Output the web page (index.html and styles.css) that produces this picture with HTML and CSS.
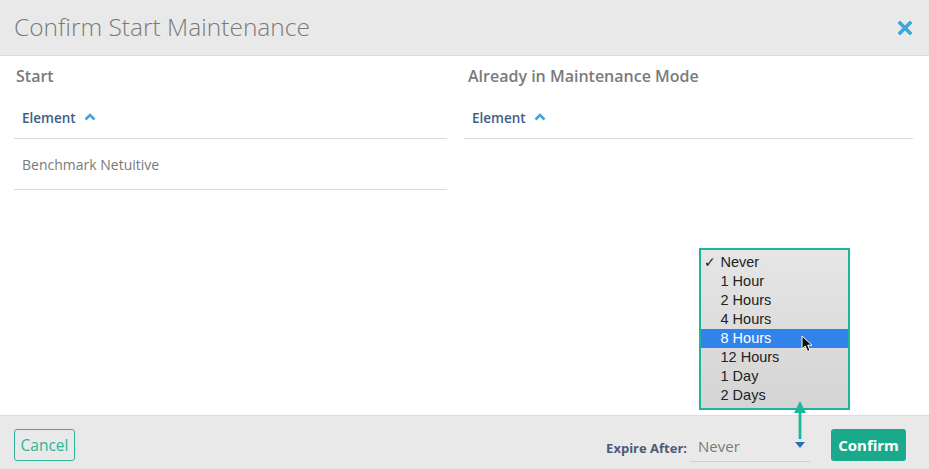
FILE: index.html
```html
<!DOCTYPE html>
<html lang="en">
<head>
<meta charset="utf-8">
<title>Confirm Start Maintenance</title>
<link rel="stylesheet" href="styles.css">
</head>
<body>
<div class="modal">
  <header class="modal-header">
    <h1 class="modal-title">Confirm Start Maintenance</h1>
    <button class="close-btn" aria-label="Close">
      <svg width="14" height="14" viewBox="0 0 14 14"><path d="M2 2 L12 12 M12 2 L2 12" stroke="#3ea6da" stroke-width="3.6" stroke-linecap="square"/></svg>
    </button>
  </header>
  <main class="modal-body">
    <section class="col col-left">
      <h2 class="col-title">Start</h2>
      <div class="table">
        <div class="th">Element
          <svg class="chev" width="12" height="8" viewBox="0 0 12 8"><path d="M1.5 6.5 L6 2 L10.5 6.5" fill="none" stroke="#3ea6da" stroke-width="2.6"/></svg>
        </div>
        <div class="td">Benchmark Netuitive</div>
      </div>
    </section>
    <section class="col col-right">
      <h2 class="col-title">Already in Maintenance Mode</h2>
      <div class="table">
        <div class="th">Element
          <svg class="chev" width="12" height="8" viewBox="0 0 12 8"><path d="M1.5 6.5 L6 2 L10.5 6.5" fill="none" stroke="#3ea6da" stroke-width="2.6"/></svg>
        </div>
      </div>
    </section>
  </main>
  <footer class="modal-footer">
    <button class="btn-cancel">Cancel</button>
    <div class="footer-right">
      <span class="expire-label">Expire After:</span>
      <div class="select">
        <span>Never</span>
        <svg class="select-caret" width="10" height="6" viewBox="0 0 10 6"><path d="M0 0 H10 L5 6 Z" fill="#2b6cbf"/></svg>
      </div>
      <button class="btn-confirm">Confirm</button>
    </div>
  </footer>

  <div class="menu">
    <ul class="menu-list">
      <li class="checked"><span class="check">✓</span>Never</li>
      <li>1 Hour</li>
      <li>2 Hours</li>
      <li>4 Hours</li>
      <li class="active">8 Hours</li>
      <li>12 Hours</li>
      <li>1 Day</li>
      <li>2 Days</li>
    </ul>
  </div>
  <svg class="pointer" width="14" height="18" viewBox="0 0 14 18"><path d="M1 1 L1 14 L4.2 11 L6.6 16.5 L9 15.4 L6.7 10.2 L11 10.2 Z" fill="#111" stroke="#fff" stroke-width="1"/></svg>
  <svg class="annot-arrow" width="14" height="38" viewBox="0 0 14 38"><path d="M7 0 L13 12 L1 12 Z" fill="#1cb79a"/><rect x="5.6" y="10" width="2.8" height="28" fill="#1cb79a"/></svg>
</div>
</body>
</html>
```

FILE: styles.css
```css
* { box-sizing: border-box; }
html, body { margin: 0; padding: 0; }
body {
  font-family: "Open Sans", "Liberation Sans", sans-serif;
  background: #fff;
  width: 929px;
  height: 469px;
  overflow: hidden;
}
.modal {
  position: relative;
  width: 929px;
  height: 469px;
  display: flex;
  flex-direction: column;
}
.modal-header {
  height: 56px;
  background: #e9e9e9;
  border-bottom: 1px solid #dcdcdc;
  display: flex;
  align-items: center;
  justify-content: space-between;
  padding: 0 17px 0 14px;
}
.modal-title {
  margin: 0;
  font-weight: 300;
  font-size: 24.5px;
  color: #7a7a7a;
  padding-bottom: 2px;
}
.close-btn {
  background: none;
  border: 0;
  padding: 0;
  width: 14px;
  height: 14px;
  display: flex;
}
.modal-body {
  flex: 1;
  display: grid;
  grid-template-columns: 433px 449px;
  column-gap: 17px;
  padding: 0 16px 0 14px;
  align-items: start;
}
.col-title {
  margin: 0;
  padding: 9px 0 0 2px;
  height: 40px;
  font-size: 16px;
  font-weight: 600;
  color: #7b7b7b;
}
.col-right .col-title { padding-left: 4px; }
.th {
  height: 43px;
  border-bottom: 1px solid #dadada;
  display: flex;
  align-items: center;
  gap: 8px;
  padding: 1px 8px 0;
  font-size: 13.5px;
  font-weight: 600;
  color: #3f5c86;
}
.chev { margin-top: -1px; }
.td {
  height: 51px;
  border-bottom: 1px solid #dadada;
  display: flex;
  align-items: center;
  padding: 0 8px;
  font-size: 14px;
  color: #7a7a7a;
}
.modal-footer {
  height: 54px;
  background: #e9e9e9;
  border-top: 1px solid #dcdcdc;
  display: flex;
  align-items: center;
  justify-content: space-between;
  padding: 4px 23px 0 14px;
}
.btn-cancel {
  height: 32px;
  width: 61px;
  background: transparent;
  border: 1.5px solid #2cb59b;
  border-radius: 3px;
  color: #2cb59b;
  font-family: "Open Sans", sans-serif;
  font-size: 15.5px;
  padding: 0;
}
.footer-right {
  display: flex;
  align-items: center;
}
.expire-label {
  font-size: 13px;
  font-weight: 700;
  color: #4b5b78;
  margin-top: 6px;
  margin-right: 3px;
}
.select {
  width: 120px;
  height: 31px;
  border-bottom: 1px solid #cfcfcf;
  display: flex;
  align-items: center;
  justify-content: space-between;
  padding: 0 5px 0 8px;
  font-size: 15px;
  color: #7a7a7a;
  margin-top: 3px;
}
.select-caret { margin-top: -2px; }
.btn-confirm {
  margin-left: 21px;
  height: 32px;
  width: 75px;
  background: #1ba98c;
  border: 0;
  border-radius: 3px;
  color: #fff;
  font-family: "Open Sans", sans-serif;
  font-weight: 700;
  font-size: 15px;
  padding: 0;
}
.menu {
  position: absolute;
  left: 699px;
  top: 248px;
  width: 151px;
  height: 162px;
  border: 2.5px solid #1cb79a;
  background: linear-gradient(#e6e6e6, #d4d4d4);
  padding-top: 2.5px;
}
.menu-list {
  list-style: none;
  margin: 0;
  padding: 0;
}
.menu-list li {
  position: relative;
  height: 19px;
  line-height: 19px;
  padding-left: 19.5px;
  font-family: "Liberation Sans", Arial, sans-serif;
  font-size: 14.5px;
  color: #222;
}
.menu-list li.active {
  background: #2f83ea;
  color: #fff;
}
.check {
  position: absolute;
  left: 3px;
  top: 0;
  font-size: 14px;
  font-weight: 700;
  font-family: "DejaVu Sans", sans-serif;
}
.pointer {
  position: absolute;
  left: 801px;
  top: 335px;
}
.annot-arrow {
  position: absolute;
  left: 793px;
  top: 401px;
}
```
